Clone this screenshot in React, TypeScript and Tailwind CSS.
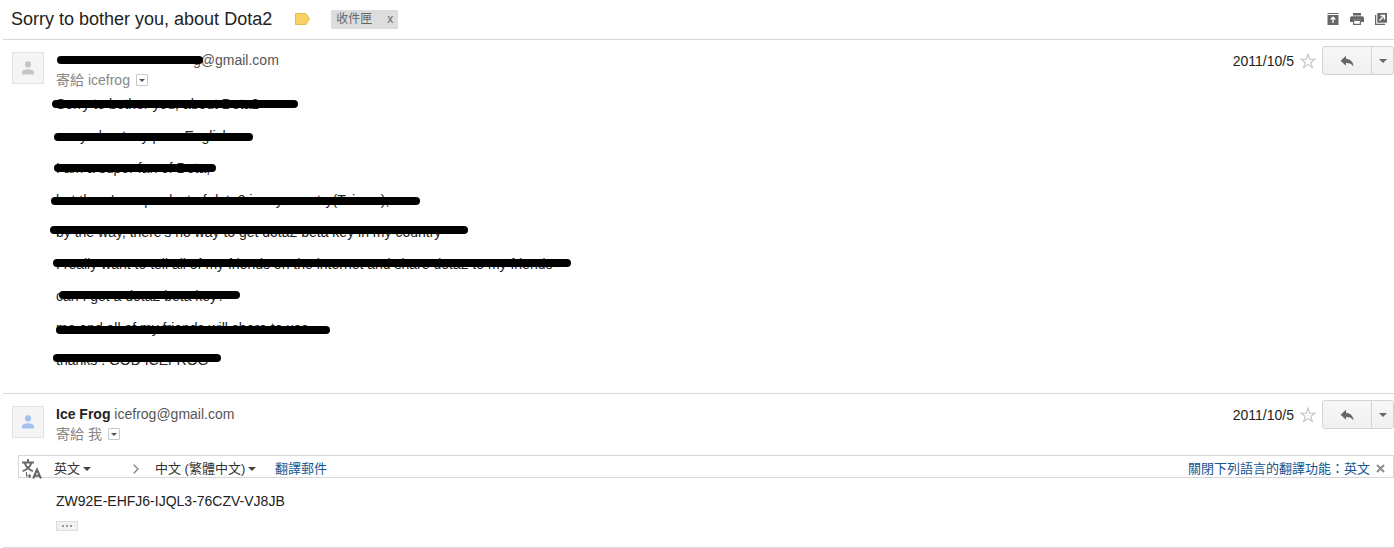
import React from 'react';

type Line = { text: string; bar: string };

const LINES: Line[] = [
  { text: 'Sorry to bother you, about Dota2', bar: 'top-1.5 -left-1 w-[246px]' },
  { text: 'sorry about my poor English~', bar: 'top-[7px] -left-0.5 w-[199px]' },
  { text: 'I am a super fan of Dota,', bar: 'top-1.5 -left-0.5 w-[162px]' },
  { text: "but there's no product of dota2 in my country(Taiwan),", bar: 'top-[7px] -left-[5px] w-[369px]' },
  { text: "by the way, there's no way to get dota2 beta key in my country", bar: 'top-1 -left-1.5 w-[418px]' },
  {
    text: 'I really want to tell all of my friends on the internet and share dota2 to my friends',
    bar: 'top-[5px] -left-[3px] w-[518px]',
  },
  { text: 'can I get a dota2 beta key?', bar: 'top-[5px] left-[3px] w-[181px]' },
  { text: 'me and all of my friends will share to use', bar: 'top-2 left-0 w-[274px]' },
  { text: 'thanks ! GOD ICEFROG', bar: 'top-1 -left-[3px] w-[168px]' },
];

const Caret = ({ className = '' }: { className?: string }) => (
  <svg viewBox="0 0 8 4" className={`w-2 h-1 shrink-0 ${className}`} fill="currentColor" aria-hidden="true">
    <path d="M0 0h8L4 4z" />
  </svg>
);

const Avatar = ({ className }: { className: string }) => (
  <div className={`w-8 h-8 shrink-0 flex items-center justify-center bg-[#f5f5f5] border border-[#e2e2e2] ${className}`}>
    <svg viewBox="0 0 12 14" className="w-3 h-3.5" fill="currentColor" aria-hidden="true">
      <circle cx="6" cy="3.4" r="3.1" />
      <path d="M0 13.5v-2C0 9.300 3.500 8.200 6 8.200s6 1.100 6 3.300v2z" />
    </svg>
  </div>
);

const DetailsButton = () => (
  <button
    type="button"
    aria-label="顯示詳細資料"
    className="w-3 h-3 flex items-center justify-center border border-[#c8c8c8] rounded-[1px] text-[#555]"
  >
    <svg viewBox="0 0 6 3" className="w-1.5 h-[3px]" fill="currentColor" aria-hidden="true">
      <path d="M0 0h6L3 3z" />
    </svg>
  </button>
);

const MessageActions = () => (
  <div className="flex items-center shrink-0 -mt-1.5">
    <time className="text-[#222]">2011/10/5</time>
    <button type="button" aria-label="加上星號" className="mx-1.5">
      <svg viewBox="0 0 16 16" className="w-4 h-4" fill="#fff" stroke="#c4c4c4" strokeWidth="1.1" aria-hidden="true">
        <path d="M8 1.200l1.700 5h5.400l-4.300 3.200 1.600 5.200L8 11.400l-4.400 3.200 1.600-5.200L.9 6.200h5.400z" />
      </svg>
    </button>
    <div className="flex h-[29px] bg-linear-to-b from-[#f7f7f7] to-[#f0f0f0] border border-[#d4d4d4] rounded-[3px] text-[#666]">
      <button type="button" aria-label="回覆" className="w-12 flex items-center justify-center">
        <svg viewBox="0 0 14 12" className="w-3.5 h-3" fill="currentColor" aria-hidden="true">
          <path d="M6 .8v3c4.300.4 7 2.800 7.600 7.700C11.800 8.900 9.600 7.800 6 7.900v2.900L.6 5.700z" />
        </svg>
      </button>
      <button
        type="button"
        aria-label="更多"
        className="w-[22px] flex items-center justify-center border-l border-[#d4d4d4]"
      >
        <Caret />
      </button>
    </div>
  </div>
);

const MessageHeader = ({ avatar, sender, to }: { avatar: string; sender: React.ReactNode; to: string }) => (
  <header className="flex items-start pt-3 pl-[9px]">
    <Avatar className={avatar} />
    <div className="flex-1 ml-3 -mt-0.5">
      <div className="text-[#555]">{sender}</div>
      <div className="flex items-center gap-1.5 text-[#888]">
        <span>寄給 {to}</span>
        <DetailsButton />
      </div>
    </div>
    <MessageActions />
  </header>
);

const LanguageSelect = ({ label, value, className }: { label: string; value: string; className: string }) => (
  <div className={`relative flex items-center text-[#333] ${className}`}>
    <select aria-label={label} className="appearance-none w-full bg-transparent outline-none">
      <option>{value}</option>
    </select>
    <Caret className="absolute right-0 text-[#444] pointer-events-none" />
  </div>
);

const TranslateBar = () => (
  <div className="flex items-center h-[23px] ml-[15px] mt-[11px] pt-1 pl-[3px] pr-2 border border-[#d8d8d8] text-[13px]">
    <svg viewBox="0 0 20 21" className="w-5 h-[21px] shrink-0" fill="none" stroke="#666" aria-hidden="true">
      <path d="M0 4.500h12M6 1v3.500M2.800 5c1 3.600 4 6.500 8 8.200M9.300 5c-1 3.600-4 6.500-8.600 8.200" strokeWidth="1.900" />
      <path d="M4.500 14v4H8M6.800 16.200L8.600 18l-1.800 1.800" strokeWidth="1.100" />
      <path d="M11.200 20.500L15 11.500l3.900 9M12.500 17.700h5" strokeWidth="2" />
    </svg>
    <LanguageSelect label="來源語言" value="英文" className="ml-3 w-[37px]" />
    <svg viewBox="0 0 6 10" className="w-1.5 h-2.5 ml-[42px]" fill="none" stroke="#888" strokeWidth="1.400" aria-hidden="true">
      <path d="M.7.7L5 5 .7 9.300" />
    </svg>
    <LanguageSelect label="目標語言" value="中文 (繁體中文)" className="ml-4 w-[101px]" />
    <a href="#translate" className="ml-[19px] text-[#15568f]">
      翻譯郵件
    </a>
    <a href="#never" className="ml-auto text-[#15568f]">
      關閉下列語言的翻譯功能：英文
    </a>
    <button type="button" aria-label="關閉" className="ml-1.5">
      <svg viewBox="0 0 9 9" className="w-[9px] h-[9px]" stroke="#8c8c8c" strokeWidth="2" aria-hidden="true">
        <path d="M1 1l7 7M8 1L1 8" />
      </svg>
    </button>
  </div>
);

const Toolbar = () => (
  <div className="ml-auto mr-[7px] flex items-center gap-[11px] text-[#666]">
    <button type="button" aria-label="全部收合">
      <svg viewBox="0 0 12 12" className="w-3 h-3" fill="currentColor" aria-hidden="true">
        <path d="M.5 0h11v1H.5zM.5 2h11v10H.5z" />
        <path d="M6 10V4.500M3.700 6.500L6 4.200l2.300 2.300" fill="none" stroke="#fff" strokeWidth="1.300" />
      </svg>
    </button>
    <button type="button" aria-label="全部列印">
      <svg viewBox="0 0 14 12" className="w-3.5 h-3" fill="currentColor" aria-hidden="true">
        <path d="M3 0h8v2.500H3zM2 3.300h10a2 2 0 0 1 2 2V9h-3V6.800H3V9H0V5.300a2 2 0 0 1 2-2z" />
        <path d="M3.600 7.400h6.800v4H3.600z" fill="#fff" stroke="currentColor" strokeWidth="1.100" />
      </svg>
    </button>
    <button type="button" aria-label="在新視窗中開啟">
      <svg viewBox="0 0 12 12" className="w-3 h-3" fill="currentColor" aria-hidden="true">
        <path d="M2.300 0H12v9.700H2.300z" />
        <path d="M.6 2v9.400H10" fill="none" stroke="currentColor" strokeWidth="1.200" />
        <path d="M4.500 7.500L9 3M5.500 2.500h4v4" fill="none" stroke="#fff" strokeWidth="1.300" />
      </svg>
    </button>
  </div>
);

const App = () => {
  return (
    <main className="min-h-screen bg-white pl-[3px] font-['Liberation_Sans','Noto_Sans_CJK_TC',sans-serif] text-[14px] leading-5 text-[#222]">
      <div className="flex items-center h-10 pb-px pl-2 border-b border-[#d8d8d8]">
        <h1 className="text-[18px] leading-6">Sorry to bother you, about Dota2</h1>
        <svg viewBox="0 0 15 12" className="w-[15px] h-3 ml-[23px]" fill="#fad165" stroke="#e3b84d" aria-hidden="true">
          <path d="M.5.5h10.300L14.400 6l-3.600 5.500H.5z" />
        </svg>
        <div className="flex items-center justify-between w-[67px] h-[19px] ml-[21px] px-[5px] bg-[#dddddd] text-[12px] text-[#666]">
          <span>收件匣</span>
          <button type="button" aria-label="移除標籤">
            x
          </button>
        </div>
        <Toolbar />
      </div>

      <article className="pb-[23px] border-b border-[#d8d8d8]">
        <MessageHeader
          avatar="text-[#c6c6c6]"
          to="icefrog"
          sender={
            <span className="relative block pl-[137px]">
              g@gmail.com
              <span className="absolute top-1.5 left-px w-[146px] h-2 rounded-full bg-black" />
            </span>
          }
        />
        <div className="flex flex-col gap-3 pl-[53px] pt-1">
          {LINES.map((line) => (
            <p key={line.text} className="relative">
              {line.text}
              <span className={`absolute h-2 rounded-full bg-black ${line.bar}`} />
            </p>
          ))}
        </div>
      </article>

      <article className="pb-4 border-b border-[#d8d8d8]">
        <MessageHeader
          avatar="text-[#a4c2f4]"
          to="我"
          sender={
            <>
              <b className="text-[#222]">Ice Frog</b> icefrog@gmail.com
            </>
          }
        />
        <TranslateBar />
        <div className="pl-[53px] pt-[13px]">
          <p>ZW92E-EHFJ6-IJQL3-76CZV-VJ8JB</p>
          <button
            type="button"
            aria-label="顯示刪節的內容"
            className="mt-2.5 w-[22px] h-2.5 flex items-center justify-center gap-0.5 bg-[#f1f1f1] border border-[#ddd]"
          >
            <span className="w-0.5 h-0.5 bg-[#999]" />
            <span className="w-0.5 h-0.5 bg-[#999]" />
            <span className="w-0.5 h-0.5 bg-[#999]" />
          </button>
        </div>
      </article>
    </main>
  );
};

export default App;
